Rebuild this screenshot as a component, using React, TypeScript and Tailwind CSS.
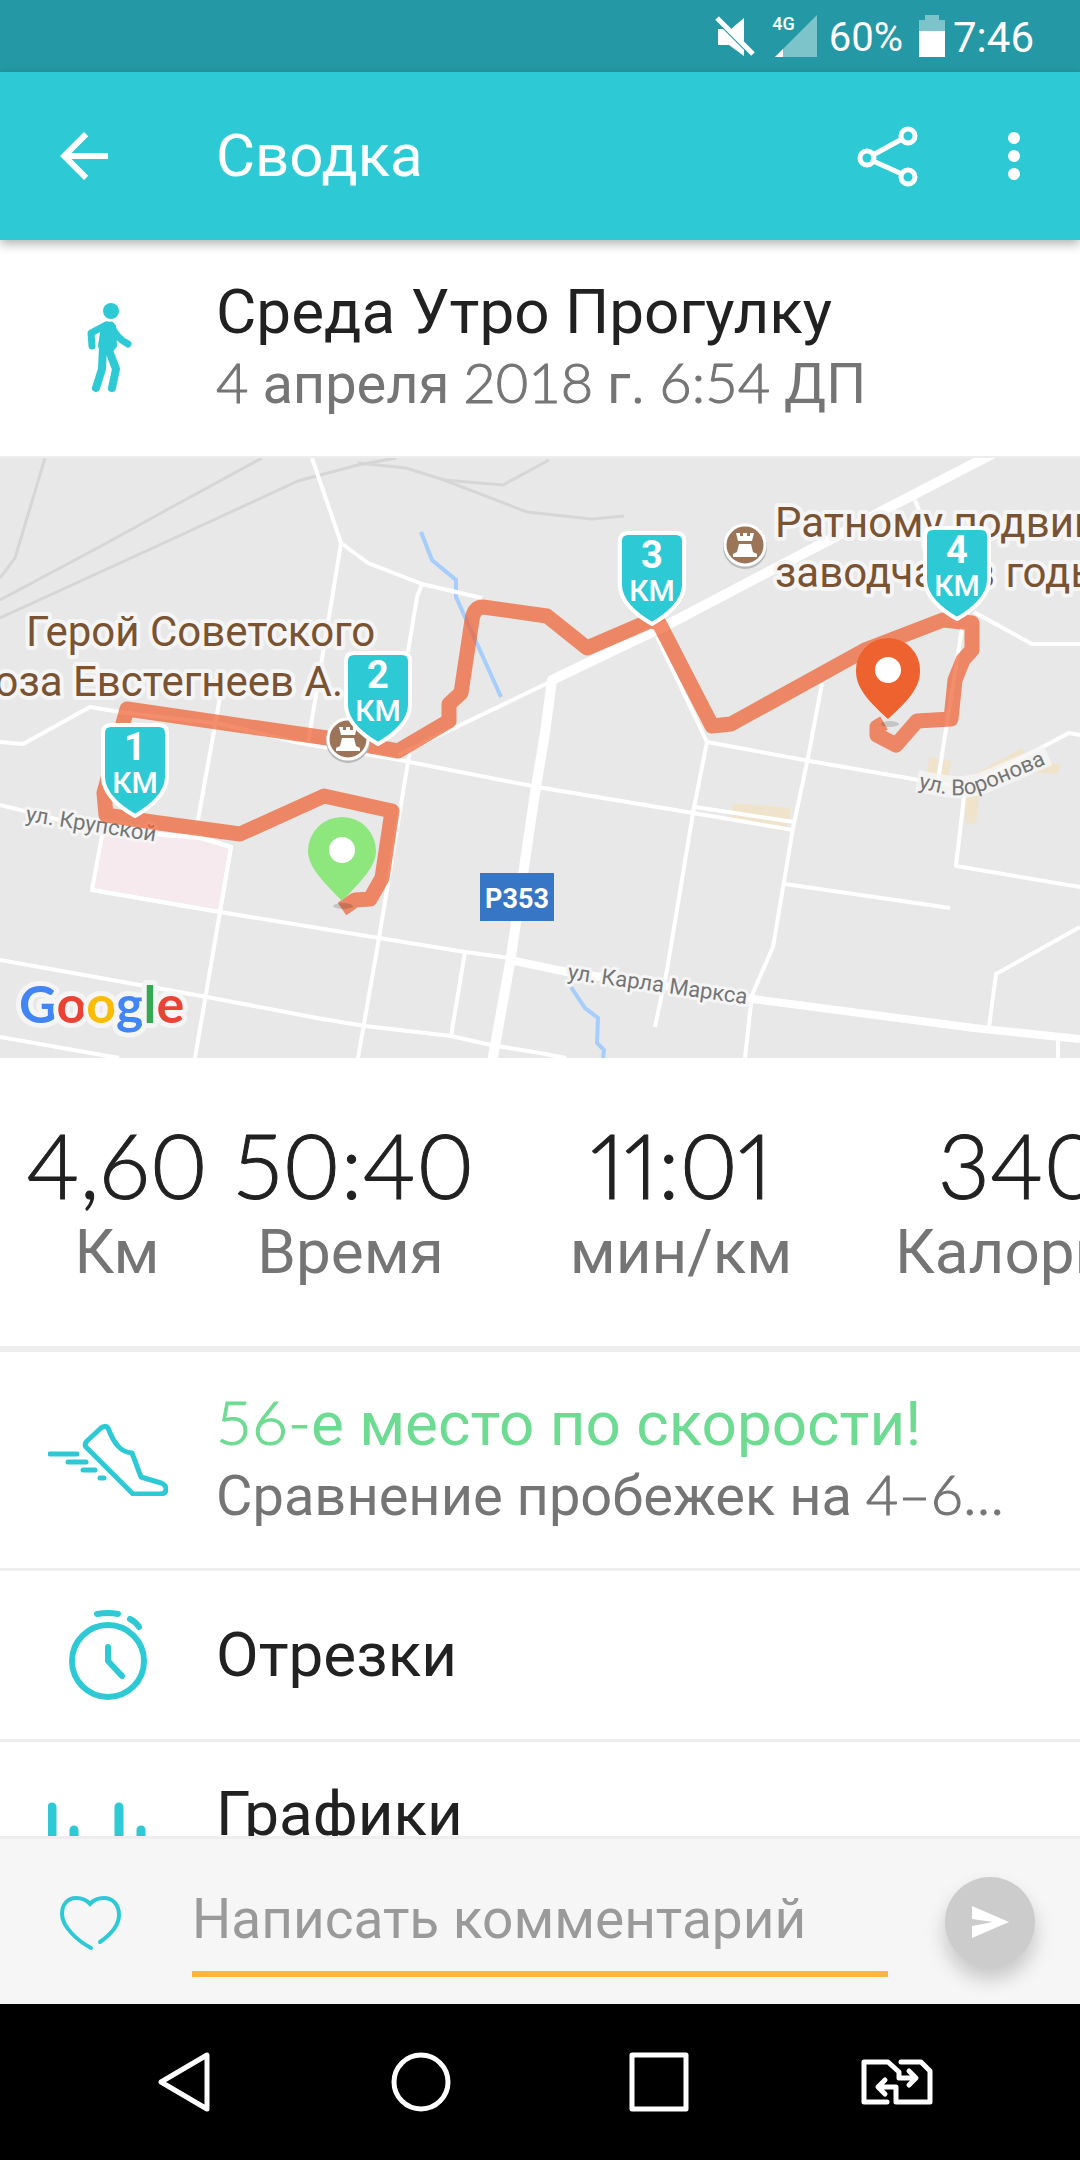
import React from 'react';

interface MixedTextProps {
  text: string;
}

interface KmBadgeProps {
  x: number;
  y: number;
  value: number;
}

interface RowProps {
  icon: React.ReactNode;
  title: string;
  subtitle?: string;
  titleColor?: string;
}

const stats = [
  { value: '4,60', label: 'Км' },
  { value: '50:40', label: 'Время' },
  { value: '11:01', label: 'мин/км' },
  { value: '340', label: 'Калории' },
];

const kmBadges = [
  { x: 135, y: 265, value: 1 },
  { x: 378, y: 193, value: 2 },
  { x: 652, y: 73, value: 3 },
  { x: 957, y: 68, value: 4 },
];

const railways = [
  'M45 0L15 100L0 120',
  'M262 0L172 49L103 87L0 142',
  'M396 0L358 7L298 23L155 89L0 160',
  'M358 5L406 10L444 22L527 54L545 56L592 61L624 58',
  'M444 22L503 27L549 2',
];

const smallRoads = [
  'M312 0L341 85L368 105L422 126L482 140',
  'M341 85L329 159L308 285',
  'M422 126L417 139L408 194',
  'M0 284L23 286L90 249L120 254L220 266L300 285L389 300L532 328L543 330L693 355L793 372',
  'M220 239L198 362',
  'M410 292L379 480L358 600',
  'M0 347L100 372L200 379L231 389L220 454L195 600',
  'M92 432L220 454L379 480L465 494L510 500',
  'M0 502L207 539L317 560L365 568L451 578L491 587L540 595L566 600',
  'M0 579L119 600',
  'M465 494L451 578',
  'M657 179L707 284L815 304L919 322L950 327',
  'M707 284L693 355L667 512L655 569',
  'M822 225L808 300L793 370L773 489L752 537L745 600',
  'M695 349L794 364',
  'M785 426L950 450',
  'M962 170L938 322',
  'M974 154L1032 186H1080',
  'M1080 277L1069 275L965 330L956 408L1080 429',
  'M1080 469L996 516L989 569',
  'M1058 582V600',
  'M915 42L922 60',
];

// Digits are set in Lato, everything else in Roboto
const MixedText = ({ text }: MixedTextProps) => (
  <>
    {text.split(/([\d:–…-]+)/).map((part, i) =>
      i % 2 ? (
        <span
          key={i}
          className="font-['Lato',sans-serif] leading-none font-light [-webkit-text-stroke:1px]"
        >
          {part}
        </span>
      ) : (
        part
      )
    )}
  </>
);

const KmBadge = ({ x, y, value }: KmBadgeProps) => (
  <g transform={`translate(${x} ${y})`}>
    <path
      d="M-24 2H24Q32 2 32 10V54C32 70 16 84 0 93C-16 84 -32 70 -32 54V10Q-32 2 -24 2Z"
      fill="#2dcad6"
      stroke="#fff"
      strokeWidth="4"
      strokeLinejoin="round"
    />
    <text y="37" textAnchor="middle" fontSize="38" fontWeight="700" fill="#fff">
      {value}
    </text>
    <text y="70" textAnchor="middle" fontSize="30" fontWeight="500" fill="#fff">
      КМ
    </text>
  </g>
);

const Rook = ({ x, y }: { x: number; y: number }) => (
  <g transform={`translate(${x} ${y})`}>
    <circle cy="2" r="22" fill="#b9b9b9" />
    <circle r="20" fill="#9c7558" stroke="#fff" strokeWidth="3" />
    <path
      d="M-9 -12H-5V-9H-2V-12H2V-9H5V-12H9L7 -4H-7ZM-6 -1H6L8 7L12 9V12H-12V9L-8 7Z"
      fill="#fff"
    />
  </g>
);

const RouteMap = () => (
  <svg
    viewBox="0 0 1080 600"
    className="block w-full shrink-0 bg-[#e8e8e8] font-['Roboto',sans-serif]"
    role="img"
    aria-label="Карта маршрута"
  >
    <g fill="#f0e3cb">
      <path d="M733 345L791 350L786 374L730 361Z" />
      <path d="M929 299L951 303L947 336L926 332Z" />
      <path d="M960 324L1022 290L1032 302L972 338Z" />
      <path d="M1036 303L1060 306L1058 316L1030 314Z" />
      <path d="M966 336L979 338L976 366L965 365Z" />
    </g>
    <path
      d="M103 372L200 380L231 389L220 454L92 432Z"
      fill="#f6eaee"
      stroke="#fff"
      strokeWidth="4"
    />
    <g fill="none" stroke="#d6d6d6" strokeWidth="3">
      {railways.map((d) => (
        <path key={d} d={d} />
      ))}
    </g>
    <g fill="none" stroke="#a6cdfb" strokeWidth="4">
      <path d="M421 74L432 102L456 122V139L501 239" />
      <path d="M571 529L585 550L598 560L597 585L604 592L603 600" />
    </g>
    <g fill="none" stroke="#fff" strokeWidth="4" strokeLinejoin="round">
      {smallRoads.map((d) => (
        <path key={d} d={d} />
      ))}
      <path d="M398 297L552 223" />
      <path d="M510 502L567 514L753 541L974 570L1080 581" strokeWidth="8" />
      <path
        d="M1000 -8L884 52L833 80L667 167L552 222L545 275L535 335L510 505L492 604"
        strokeWidth="10"
      />
    </g>

    <g stroke="#f5f5f5" strokeWidth="8" strokeLinejoin="round" paintOrder="stroke">
      <g fill="#7a5432" fontSize="42">
        <text x="26" y="188">
          Герой Советского
        </text>
        <text x="343" y="238" textAnchor="end">
          Союза Евстегнеев А.
        </text>
        <text x="775" y="79">
          Ратному подвигу
        </text>
        <text x="775" y="129">
          заводчан в годы
        </text>
      </g>
      <g fill="#757575" fontSize="22" strokeWidth="6">
        <text transform="translate(25 363) rotate(9)">ул. Крупской</text>
        <text transform="translate(567 521) rotate(8)">ул. Карла Маркса</text>
      </g>
    </g>
    <path
      d="M917 323L945 328Q968 332 990 322L1048 297"
      fill="none"
      stroke="#f5f5f5"
      strokeOpacity="0.8"
      strokeWidth="22"
    />
    <path id="voronova" d="M918 330L945 336Q968 340 990 330L1080 292" fill="none" />
    <text fill="#757575" fontSize="22">
      <textPath href="#voronova">ул. Воронова</textPath>
    </text>

    <rect x="480" y="415" width="74" height="48" fill="#3776c4" />
    <text x="517" y="450" textAnchor="middle" fontSize="27" fontWeight="700" fill="#fff">
      Р353
    </text>

    <path
      d="M342 451L355 442L370 441L382 420L392 353L324 338L240 376L152 364L106 357L104 335L127 251L327 280L398 293L449 263V246L461 235L472 162Q474 149 483 149L547 158L587 190L650 163L659 165L712 268L731 266L865 192L943 162L972 165V192L963 202L955 222L951 261L917 263L896 287L877 277V269L884 265"
      fill="none"
      stroke="#ee5c2c"
      strokeOpacity="0.7"
      strokeWidth="15"
      strokeLinejoin="round"
    />

    <Rook x={348} y={281} />
    <Rook x={745} y={87} />

    <g>
      <ellipse cx="343" cy="448" rx="10" ry="3" fill="#000" fillOpacity="0.15" />
      <path
        d="M342 359A34 34 0 0 1 376 393C376 410 358 426 342 443C326 426 308 410 308 393A34 34 0 0 1 342 359Z"
        fill="#8de77d"
      />
      <circle cx="342" cy="392" r="13" fill="#fff" />
    </g>
    <g>
      <ellipse cx="890" cy="266" rx="9" ry="3" fill="#000" fillOpacity="0.15" />
      <path
        d="M888 180A32 32 0 0 1 920 213C920 232 904 246 888 261C872 246 856 232 856 213A32 32 0 0 1 888 180Z"
        fill="#ed622e"
      />
      <circle cx="888" cy="212" r="13" fill="#fff" />
    </g>

    {kmBadges.map((badge) => (
      <KmBadge key={badge.value} {...badge} />
    ))}

    <text
      x="19"
      y="565"
      fontSize="52"
      fontWeight="700"
      fontFamily="Lato, sans-serif"
      stroke="#f5f5f5"
      strokeWidth="10"
      strokeLinejoin="round"
      paintOrder="stroke"
    >
      <tspan fill="#4285f4">G</tspan>
      <tspan fill="#ea4335">o</tspan>
      <tspan fill="#fbbc05">o</tspan>
      <tspan fill="#4285f4">g</tspan>
      <tspan fill="#34a853">l</tspan>
      <tspan fill="#ea4335">e</tspan>
    </text>
  </svg>
);

const WalkIcon = () => (
  <svg viewBox="0 0 96 96" className="size-24" fill="none" stroke="#2dcad6" strokeLinecap="round" strokeLinejoin="round">
    <circle cx="51" cy="11" r="8" fill="#2dcad6" stroke="none" />
    <path d="M43 26Q48 21 54 26L55 46L50 52H43L40 46Z" fill="#2dcad6" stroke="#2dcad6" strokeWidth="4" />
    <path d="M46 25L31 33L32 46" strokeWidth="7" />
    <path d="M51 25Q56 38 68 44" strokeWidth="7" />
    <path d="M43 46L42 69L36 88" strokeWidth="8" />
    <path d="M48 48L56 69L52 88" strokeWidth="8" />
  </svg>
);

const ShoeIcon = () => (
  <svg viewBox="0 0 120 72" className="h-[72px] w-[120px]" fill="none" stroke="#2dcad6" strokeWidth="5" strokeLinecap="round" strokeLinejoin="round">
    <path d="M53 4Q58 1 60 4Q65 17 70 22Q75 28 84 29L93 53L113 59Q118 61 118 65Q118 70 112 70H85L38 23Q36 20 39 17Z" />
    <path d="M2 30H29M20 38H38M35 46H47M52 54H56" />
  </svg>
);

const StopwatchIcon = () => (
  <svg viewBox="0 0 96 96" className="size-24" fill="none" stroke="#2dcad6" strokeWidth="6" strokeLinecap="round" strokeLinejoin="round">
    <circle cx="48" cy="54" r="36" />
    <path d="M37 7Q48 5 58 7M70 12Q76 15 79 20M48 40V54L62 69" />
  </svg>
);

const ChartIcon = () => (
  <svg viewBox="0 0 120 96" className="h-24 w-[120px]" fill="none" stroke="#2dcad6" strokeWidth="9" strokeLinecap="round">
    <path d="M4 5V91M26 28V91M49 60V91M71 5V91M93 28V91M115 60V91" />
  </svg>
);

const Row = ({ icon, title, subtitle, titleColor = 'text-[#212121]' }: RowProps) => (
  <a href="#" className="flex shrink-0 items-center border-b-[3px] border-[#eee] py-9">
    <span className="flex w-[216px] shrink-0 justify-center">{icon}</span>
    <span className="flex min-w-0 flex-1 flex-col pr-16">
      <span className={`truncate text-[62px] leading-[72px] ${titleColor}`}>
        <MixedText text={title} />
      </span>
      {subtitle && (
        <span className="truncate text-[56px] leading-[72px] text-[#757575]">
          <MixedText text={subtitle} />
        </span>
      )}
    </span>
  </a>
);

const StatusBar = () => (
  <div className="flex h-[72px] shrink-0 items-center justify-end bg-[#2499a5] pr-[46px] text-white">
    <svg viewBox="0 0 42 44" className="mr-4 h-11 w-[42px]" fill="#fff">
      <path d="M17 15L30 4V28ZM4 15H9L30 36V42L15 31H4Z" />
      <path d="M3 4L39 40" stroke="#fff" strokeWidth="5" />
    </svg>
    <span className="self-start pt-3 text-lg leading-6 font-medium">4G</span>
    <svg viewBox="0 0 42 42" className="-ml-5 mr-3 size-[42px]">
      <path d="M42 0V42H0Z" fill="#7dc4ca" />
      <path d="M8 34V42H0Z" fill="#fff" />
    </svg>
    <span className="pt-1 text-[40px] leading-none">60%</span>
    <svg viewBox="0 0 26 42" className="mr-2 ml-4 h-[42px] w-[26px]">
      <path d="M6 0H20V5H26V16H0V5H6Z" fill="#7dc4ca" />
      <path d="M0 16H26V42H0Z" fill="#fff" />
    </svg>
    <span className="pt-1 text-[42px] leading-none">7:46</span>
  </div>
);

const Toolbar = () => (
  <header className="relative z-10 flex h-[168px] shrink-0 items-center bg-[#2dcad6] px-12 text-white shadow-[0_4px_10px_rgba(0,0,0,0.3)]">
    <button type="button" aria-label="Назад" className="mr-24">
      <svg viewBox="0 0 24 24" className="size-[72px]" fill="#fff">
        <path d="M20 11H7.83l5.59-5.59L12 4l-8 8 8 8 1.41-1.41L7.83 13H20v-2z" />
      </svg>
    </button>
    <h1 className="flex-1 text-[60px] leading-[72px]">Сводка</h1>
    <button type="button" aria-label="Поделиться" className="mr-[72px]">
      <svg viewBox="0 0 72 72" className="size-[72px]" fill="none" stroke="#fff" strokeWidth="5">
        <circle cx="15" cy="38" r="7" />
        <circle cx="56" cy="16" r="7" />
        <circle cx="56" cy="57" r="7" />
        <path d="M21 35L50 19M21 41L50 54" />
      </svg>
    </button>
    <button type="button" aria-label="Ещё">
      <svg viewBox="0 0 36 72" className="h-[72px] w-9" fill="#fff">
        <circle cx="18" cy="18" r="6" />
        <circle cx="18" cy="36" r="6" />
        <circle cx="18" cy="54" r="6" />
      </svg>
    </button>
  </header>
);

const CommentBar = () => (
  <form className="flex h-[168px] shrink-0 items-center border-t-[3px] border-[#eee] bg-[#f6f6f6] pr-[45px] pl-[54px]">
    <button type="button" aria-label="Нравится">
      <svg viewBox="0 0 72 72" className="size-[72px]" fill="none" stroke="#2dcad6" strokeWidth="4" strokeLinecap="round">
        <path d="M37 62C24 55 8 41 8 28C8 18 14 12 22 12Q31 12 36 18Q41 12 50 12C58 12 65 18 65 29C65 39 56 49 46 56" />
      </svg>
    </button>
    <input
      type="text"
      aria-label="Комментарий"
      placeholder="Написать комментарий"
      className="mr-[57px] ml-[66px] h-[110px] min-w-0 flex-1 border-b-[6px] border-[#fdb53c] bg-transparent text-[55px] text-[#212121] outline-none placeholder:text-[#9a9a9a]"
    />
    <button
      type="submit"
      aria-label="Отправить"
      className="flex size-[90px] items-center justify-center rounded-full bg-[#ccc] shadow-[0_12px_20px_rgba(0,0,0,0.2)]"
    >
      <svg viewBox="0 0 90 90" className="size-[90px]" fill="#fff">
        <path d="M27 29L64 45L27 61V49L48 45L27 42Z" />
      </svg>
    </button>
  </form>
);

const NavBar = () => (
  <nav className="grid h-[156px] shrink-0 grid-cols-4 items-center justify-items-center bg-black px-16">
    <button type="button" aria-label="Назад">
      <svg viewBox="0 0 72 72" className="size-[72px]" fill="none" stroke="#fff" strokeWidth="5" strokeLinejoin="round">
        <path d="M14 36L60 9V63Z" />
      </svg>
    </button>
    <button type="button" aria-label="Домой">
      <svg viewBox="0 0 72 72" className="size-[72px]" fill="none" stroke="#fff" strokeWidth="5">
        <circle cx="36" cy="36" r="27" />
      </svg>
    </button>
    <button type="button" aria-label="Недавние">
      <svg viewBox="0 0 72 72" className="size-[72px]" fill="none" stroke="#fff" strokeWidth="5" strokeLinejoin="round">
        <path d="M9 9H63V63H9Z" />
      </svg>
    </button>
    <button type="button" aria-label="Сменить SIM-карту">
      <svg viewBox="0 0 72 72" className="size-[72px]" fill="none" stroke="#fff" strokeWidth="5" strokeLinecap="round" strokeLinejoin="round">
        <path d="M26 56H3V16H27L38 26V32H54M48 25L55 32L48 39" />
        <path d="M40 16H60L69 25V56H35V41H18M24 34L17 41L24 48" />
      </svg>
    </button>
  </nav>
);

const App = () => {
  return (
    <div className="flex h-screen flex-col bg-white font-['Roboto',sans-serif]">
      <StatusBar />
      <Toolbar />
      <main className="flex min-h-0 flex-1 flex-col overflow-hidden">
        <section className="flex shrink-0 items-center border-b-2 border-[#eee] py-9">
          <div className="flex w-[216px] justify-center">
            <WalkIcon />
          </div>
          <div>
            <h2 className="text-[62px] leading-[72px] text-[#212121]">Среда Утро Прогулку</h2>
            <p className="text-[56px] leading-[72px] text-[#757575]">
              <MixedText text="4 апреля 2018 г. 6:54 ДП" />
            </p>
          </div>
        </section>
        <RouteMap />
        <dl className="grid shrink-0 grid-cols-[234px_233px_428px_250px] overflow-hidden border-b-[6px] border-[#eee] pt-[58px] pb-[54px] text-center">
          {stats.map((stat) => (
            <div key={stat.label} className="flex flex-col-reverse">
              <dt className="text-[62px] leading-[80px] text-[#757575]">{stat.label}</dt>
              <dd className="font-['Lato',sans-serif] text-[90px] leading-[96px] font-light text-[#212121] proportional-nums [-webkit-text-stroke:1px]">
                {stat.value}
              </dd>
            </div>
          ))}
        </dl>
        <Row
          icon={<ShoeIcon />}
          title="56-е место по скорости!"
          subtitle="Сравнение пробежек на 4–6…"
          titleColor="text-[#6edb92]"
        />
        <Row icon={<StopwatchIcon />} title="Отрезки" />
        <Row icon={<ChartIcon />} title="Графики" subtitle="Темп и высота" />
      </main>
      <CommentBar />
      <NavBar />
    </div>
  );
};

export default App;
